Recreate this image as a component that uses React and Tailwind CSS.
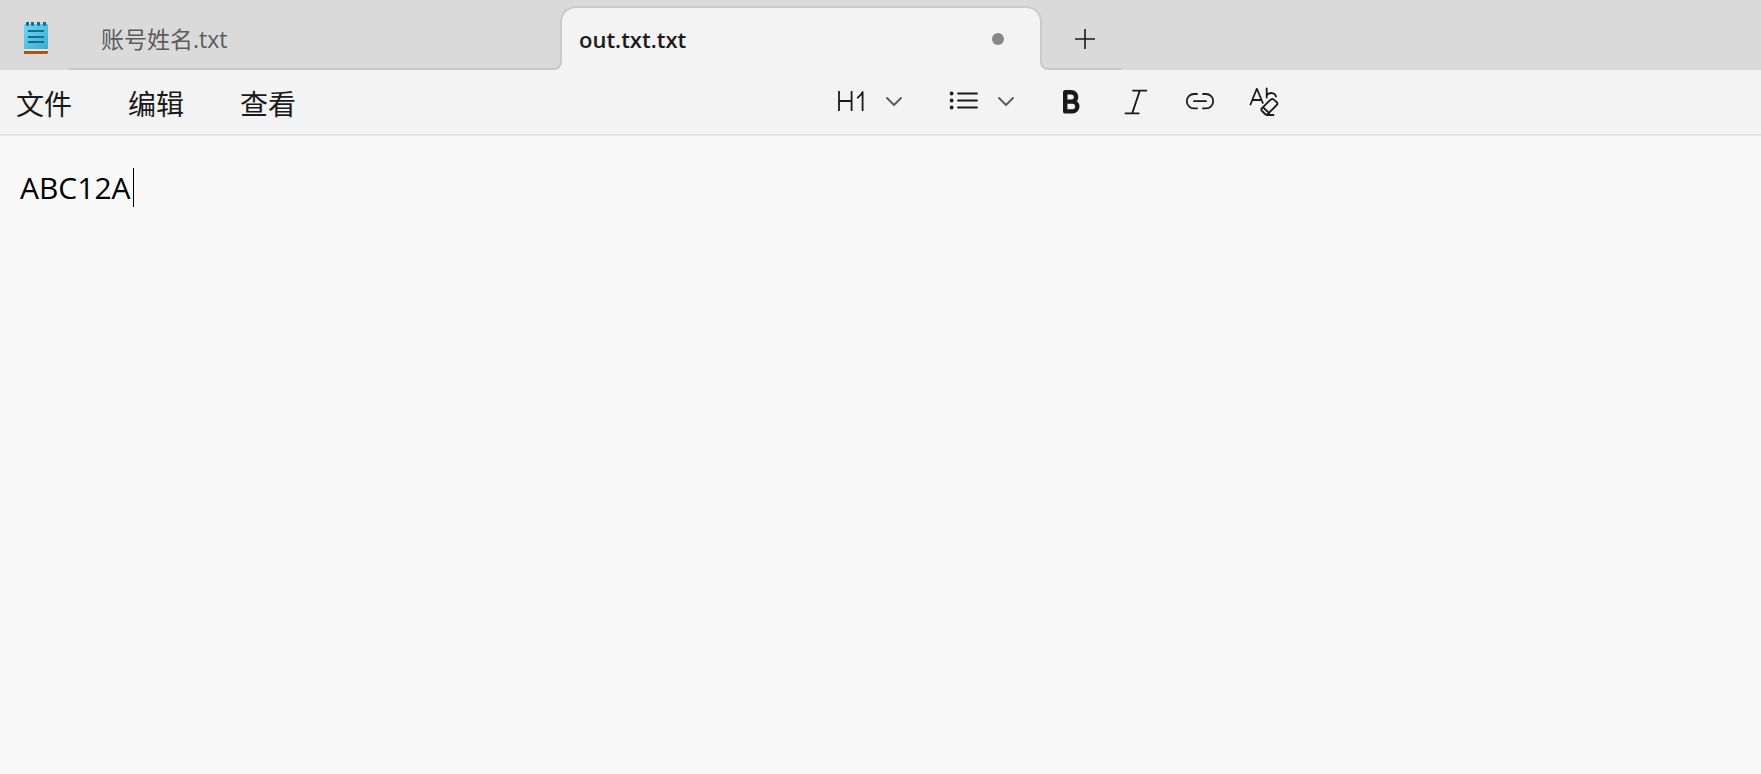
import { useState } from "react";

function NotepadIcon() {
  return (
    <svg width="24" height="32" viewBox="0 0 24 32" aria-hidden="true">
      <defs>
        <linearGradient id="page" x1="0" y1="0" x2="1" y2="1">
          <stop offset="0" stopColor="#72d5f2" />
          <stop offset="1" stopColor="#3fabce" />
        </linearGradient>
      </defs>
      <rect y="2" width="24" height="25" fill="url(#page)" />
      <rect y="27" width="24" height="2" fill="#e3e6e8" />
      <path d="M0 29h24v2l-1 1H0z" fill="#b2550c" />
      <path d="M2 0h3v3l-1 1H3L2 3zM7 0h3v3L9 4H8L7 3zM13 0h3v3l-1 1h-1l-1-1zM19 0h3v3l-1 1h-1l-1-1z" fill="#0c6f96" />
      <path d="M4 9h16M4 15h16M4 20h16" stroke="#0c6f96" strokeWidth="2" />
    </svg>
  );
}

function Chevron() {
  return (
    <svg width="16" height="10" viewBox="0 0 16 10" fill="none" stroke="#5c5c5c" strokeWidth="1.9" strokeLinecap="round" strokeLinejoin="round" aria-hidden="true">
      <path d="M1 1l7 7 7-7" />
    </svg>
  );
}

function Icon({ children, width = "1.8" }) {
  return (
    <svg width="32" height="32" viewBox="0 0 32 32" fill="none" stroke="#1a1a1a" strokeWidth={width} strokeLinecap="round" strokeLinejoin="round" aria-hidden="true">
      {children}
    </svg>
  );
}

function Flare({ side }) {
  const left = side === "left";
  return (
    <span className={`absolute bottom-0 size-2.5 bg-[#f3f3f3] ${left ? "right-full" : "left-full"}`}>
      <span
        className={`block size-full border-b-2 border-[#cacaca] bg-[#dadada] ${
          left ? "rounded-br-lg border-r-2" : "rounded-bl-lg border-l-2"
        }`}
      />
    </span>
  );
}

const menus = ["文件", "编辑", "查看"];

export default function App() {
  const [text, setText] = useState("ABC12A");
  return (
    <div className="flex min-h-screen flex-col bg-[#f9f9f9] font-['Open_Sans','Noto_Sans_CJK_SC',sans-serif] text-[#1a1a1a]">
      <header className="flex h-[70px] items-end bg-[#dadada]">
        <div className="flex h-full w-[68px] items-center pl-6 pt-1.5">
          <NotepadIcon />
        </div>
        <div role="tablist" aria-label="Tabs" className="flex h-16">
          <button role="tab" aria-selected="false" className="flex w-[492px] items-center border-b-2 border-[#cacaca] pl-[33px] pt-1 text-[23px] text-[#5c5c5c]">
            账号姓名.txt
          </button>
          <button role="tab" aria-selected="true" className="relative flex w-[482px] items-center justify-between rounded-t-2xl border-x-2 border-t-2 border-[#cacaca] bg-[#f3f3f3] pl-[17px] pr-9 text-[22px] font-semibold">
            <Flare side="left" />
            out.txt.txt
            <span className="size-3 rounded-full bg-[#878787]" />
            <Flare side="right" />
          </button>
        </div>
        <button aria-label="New tab" className="flex h-16 w-20 items-center border-b-2 border-[#cacaca] pl-[33px] pt-1">
          <svg width="20" height="20" viewBox="0 0 20 20" stroke="#1a1a1a" strokeWidth="1.6" aria-hidden="true">
            <path d="M0 10h20M10 0v20" />
          </svg>
        </button>
      </header>

      <div className="flex h-[66px] items-center border-b-2 border-[#e5e5e5] bg-[#f3f3f3]">
        <nav className="flex gap-14 pl-4 pt-1">
          {menus.map((m) => (
            <button key={m} className="text-[28px] leading-9">{m}</button>
          ))}
        </nav>
        <div role="toolbar" aria-label="Formatting" className="ml-[538px] flex items-center">
          <button aria-label="Heading" className="flex w-28 items-center gap-5">
            <Icon>
              <path d="M5 5v20M17.600 5v20M5 15h12.600M23.200 12.200c2.600-2 4.600-4 5.400-6.200v19" strokeLinecap="butt" />
            </Icon>
            <Chevron />
          </button>
          <button aria-label="List" className="flex w-[109px] items-center gap-5">
            <Icon>
              <path d="M12 7.500h19M12 14.500h19M12 21.500h19" />
              <g fill="#1a1a1a" stroke="none">
                <circle cx="5.6" cy="7.5" r="1.9" />
                <circle cx="5.6" cy="14.5" r="1.9" />
                <circle cx="5.6" cy="21.5" r="1.9" />
              </g>
            </Icon>
            <Chevron />
          </button>
          <div className="flex gap-8">
            <button aria-label="Bold">
              <Icon width="4.4">
                <path d="M10.200 6.200h6.200a4.600 4.600 0 0 1 0 9.400h-6.200zM10.200 15.600h7.200a4.900 4.900 0 0 1 0 9.800h-7.200z" />
              </Icon>
            </button>
            <button aria-label="Italic">
              <Icon>
                <path d="M14 4.600h13.400M6.500 27.400h13.200M20.800 4.600l-7.600 22.800" />
              </Icon>
            </button>
            <button aria-label="Link">
              <Icon>
                <path d="M14 8h-3a7 7 0 0 0 0 14.400h3M20 8h3a7 7 0 0 1 0 14.400h-3M11 15.200h12" />
              </Icon>
            </button>
            <button aria-label="Clear formatting">
              <Icon>
                <path d="M3.500 18.500L9.700 3h.3L15.800 17M5.600 14h8.200M19.700 2.500v9M19.700 9.500c2.300-3.600 8.600-3.400 9.300 1.200M23 14.200l-8 8a2 2 0 0 0 0 2.800l3 3a2 2 0 0 0 2.800 0l9-9a2 2 0 0 0 0-2.800l-3-2.600a2 2 0 0 0-2.800 0zM16.200 21.500l6 5.600M20 29h6.500" />
              </Icon>
            </button>
          </div>
        </div>
      </div>

      <main className="relative flex flex-1">
        <textarea
          aria-label="Document"
          value={text}
          onChange={(e) => setText(e.target.value)}
          spellCheck={false}
          className="flex-1 resize-none bg-transparent px-5 pt-8 text-3xl leading-10 text-black caret-transparent outline-none"
        />
        <span className="absolute left-[133px] top-8 h-[39px] w-px bg-black" aria-hidden="true" />
      </main>
    </div>
  );
}
